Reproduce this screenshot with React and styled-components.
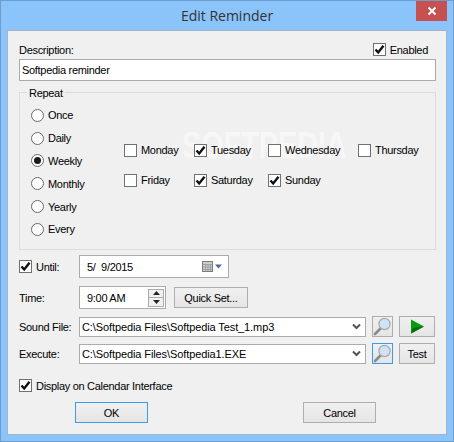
import React from "react";
import styled, { createGlobalStyle } from "styled-components";

const GlobalStyle = createGlobalStyle`
  html, body { margin: 0; padding: 0; background: #8ac4fa; }
  * { box-sizing: border-box; }
`;

const Window = styled.div`
  position: relative;
  width: 454px;
  height: 442px;
  display: flex;
  flex-direction: column;
  padding: 0 6px 6px 6px;
  background: #8ac4fa;
  border: 1px solid #6e9ccb;
  font-family: "Liberation Sans", Arial, sans-serif;
  font-size: 11px;
  letter-spacing: -0.3px;
  color: #000;
`;

const TitleBar = styled.div`
  height: 29px;
  flex: none;
  display: grid;
  grid-template-columns: 1fr auto 1fr;
`;

const Title = styled.div`
  grid-column: 2;
  font-family: "Open Sans", sans-serif;
  font-size: 14px;
  letter-spacing: 0;
  line-height: 30px;
  color: #333;
`;

const CloseButton = styled.div`
  grid-column: 3;
  justify-self: end;
  width: 31px;
  height: 20px;
  background: #c75050;
  display: flex;
  align-items: center;
  justify-content: center;
`;

const Client = styled.div`
  flex: 1;
  display: flex;
  flex-direction: column;
  padding: 0 10px 0 11px;
  background: #f0f0f0;
  border: 1px solid #a3b4c6;
`;

const TopRow = styled.div`
  height: 28px;
  display: flex;
  align-items: flex-end;
  justify-content: space-between;
  padding: 0 8px 3px 0;
`;

const Input = styled.div`
  height: 22px;
  padding-left: 2px;
  display: flex;
  align-items: center;
  background: #fff;
  border: 1px solid #ababab;
  white-space: pre;
`;

const Group = styled.fieldset`
  margin: 3px 0 0;
  padding: 0 0 0 11px;
  height: 166px;
  display: flex;
  border: 1px solid #dcdcdc;
`;

const Legend = styled.legend`
  margin-left: -4px;
  padding: 2px 2px 0;
  line-height: 14px;
`;

const RadioColumn = styled.div`
  width: 93px;
  flex: none;
  margin-top: 4px;
  display: flex;
  flex-direction: column;
`;

const Option = styled.label`
  height: ${(p) => p.$height || "auto"};
  display: flex;
  align-items: center;
  gap: 4px;
  white-space: nowrap;
`;

const RadioMark = styled.span`
  width: 13px;
  height: 13px;
  flex: none;
  display: flex;
  align-items: center;
  justify-content: center;
  background: #fff;
  border: 1px solid #6a6a6a;
  border-radius: 50%;
  &::after {
    content: "";
    display: ${(p) => (p.$on ? "block" : "none")};
    width: 7px;
    height: 7px;
    border-radius: 50%;
    background: #1a1a1a;
  }
`;

const CheckMark = styled.span`
  width: 13px;
  height: 13px;
  flex: none;
  display: flex;
  align-items: center;
  justify-content: center;
  background: #fff;
  border: 1px solid #707070;
`;

const DaysGrid = styled.div`
  position: relative;
  z-index: 1;
  margin-top: 35px;
  display: grid;
  grid-template-columns: 70px 74px 90px auto;
  grid-auto-rows: 30px;
  justify-content: start;
  align-content: start;
`;

const FieldRow = styled.div`
  display: flex;
  align-items: center;
  margin-top: ${(p) => p.$top || 0}px;
`;

const FieldLabel = styled.div`
  width: 60px;
  flex: none;
  white-space: nowrap;
`;

const DateBox = styled(Input)`
  width: 150px;
  height: 23px;
  padding-left: 7px;
  justify-content: space-between;
  padding-right: 5px;
`;

const TimeBox = styled(Input)`
  width: 87px;
  height: 23px;
  padding-left: 7px;
  justify-content: space-between;
  padding-right: 1px;
`;

const Spinner = styled.div`
  width: 16px;
  height: 18px;
  display: flex;
  flex-direction: column;
  border: 1px solid #ababab;
`;

const SpinPart = styled.div`
  flex: 1;
  display: flex;
  align-items: center;
  justify-content: center;
  background: #f0f0f0;
  & + & { border-top: 1px solid #ababab; }
`;

const Button = styled.div`
  width: ${(p) => p.$width}px;
  height: 21px;
  margin-left: ${(p) => p.$left || 0}px;
  flex: none;
  display: flex;
  align-items: center;
  justify-content: center;
  background: linear-gradient(#f0f0f0, #e5e5e5);
  border: 1px solid ${(p) => (p.$focus ? "#3c9bf0" : "#adadad")};
`;

const Combo = styled(Input)`
  width: 287px;
  height: 20px;
  padding-right: 4px;
  letter-spacing: -0.1px;
  justify-content: space-between;
`;

const Footer = styled.div`
  margin-top: 10px;
  display: flex;
  padding-left: 56px;
  gap: 155px;
`;

const Watermark = styled.div`
  position: absolute;
  left: 181px;
  top: 124px;
  font-family: "Liberation Sans", sans-serif;
  font-weight: bold;
  font-size: 36px;
  letter-spacing: 0;
  color: rgba(255, 255, 255, 0.55);
  transform: scaleX(0.8);
  transform-origin: left;
  pointer-events: none;
`;

const Check = () => (
  <svg width="11" height="11" viewBox="0 0 11 11">
    <path d="M1.5 5.5 L4.2 8.5 L9.5 1.8" fill="none" stroke="#111" strokeWidth="2.4" />
  </svg>
);

const Checkbox = ({ on, label }) => (
  <Option>
    <CheckMark>{on && <Check />}</CheckMark>
    {label}
  </Option>
);

const Radio = ({ on, label }) => (
  <Option $height="22.8px">
    <RadioMark $on={on} />
    {label}
  </Option>
);

const Chevron = () => (
  <svg width="9" height="7" viewBox="0 0 9 7">
    <path d="M1 1.5 L4.5 5 L8 1.5" fill="none" stroke="#555" strokeWidth="2" />
  </svg>
);

const Magnifier = () => (
  <svg width="19" height="19" viewBox="0 0 19 19">
    <path d="M9 10 L2 17" stroke="#8a8a8a" strokeWidth="2.6" strokeLinecap="round" />
    <circle cx="11.5" cy="7" r="5.6" fill="#cfe2f7" stroke="#a8a8a8" strokeWidth="1.2" />
  </svg>
);

const CalendarIcon = () => (
  <svg width="21" height="11" viewBox="0 0 21 11">
    <rect x="0.5" y="0.5" width="10" height="10" fill="#c9ced2" stroke="#7c7c7c" />
    <path d="M1 3.5H10M1 6H10M1 8.5H10M3.5 3V10M6 3V10M8.5 3V10" stroke="#939393" strokeWidth="0.7" />
    <path d="M13 3.5H20L16.5 7.5Z" fill="#4a6d94" />
  </svg>
);

const days = [
  { label: "Monday" },
  { label: "Tuesday", on: true },
  { label: "Wednesday" },
  { label: "Thursday" },
  { label: "Friday" },
  { label: "Saturday", on: true },
  { label: "Sunday", on: true },
];

const repeats = ["Once", "Daily", "Weekly", "Monthly", "Yearly", "Every"];

export default function App() {
  return (
    <Window>
      <GlobalStyle />
      <TitleBar>
        <Title>Edit Reminder</Title>
        <CloseButton>
          <svg width="10" height="10" viewBox="0 0 10 10">
            <path d="M1.5 1.5 L8.5 8.5 M8.5 1.5 L1.5 8.5" stroke="#fff" strokeWidth="2" />
          </svg>
        </CloseButton>
      </TitleBar>
      <Client>
        <TopRow>
          <span>Description:</span>
          <Checkbox on label="Enabled" />
        </TopRow>
        <Input>Softpedia reminder</Input>
        <Group>
          <Legend>Repeat</Legend>
          <RadioColumn>
            {repeats.map((r) => (
              <Radio key={r} label={r} on={r === "Weekly"} />
            ))}
          </RadioColumn>
          <DaysGrid>
            {days.map((d) => (
              <Checkbox key={d.label} label={d.label} on={d.on} />
            ))}
          </DaysGrid>
        </Group>
        <FieldRow $top={5}>
          <FieldLabel>
            <Checkbox on label="Until:" />
          </FieldLabel>
          <DateBox>
            5/  9/2015
            <CalendarIcon />
          </DateBox>
        </FieldRow>
        <FieldRow $top={8}>
          <FieldLabel>Time:</FieldLabel>
          <TimeBox>
            9:00 AM
            <Spinner>
              <SpinPart>
                <svg width="7" height="4" viewBox="0 0 7 4"><path d="M3.5 0L7 4H0Z" fill="#222" /></svg>
              </SpinPart>
              <SpinPart>
                <svg width="7" height="4" viewBox="0 0 7 4"><path d="M0 0H7L3.5 4Z" fill="#222" /></svg>
              </SpinPart>
            </Spinner>
          </TimeBox>
          <Button $width={74} $left={8}>Quick Set...</Button>
        </FieldRow>
        <FieldRow $top={7}>
          <FieldLabel>Sound File:</FieldLabel>
          <Combo>
            C:\Softpedia Files\Softpedia Test_1.mp3
            <Chevron />
          </Combo>
          <Button $width={21} $left={6}><Magnifier /></Button>
          <Button $width={36} $left={6}>
            <svg width="15" height="15" viewBox="0 0 15 15">
              <path d="M1 0.5 L14 7.5 L1 14.5Z" fill="#0b9a0b" />
              <path d="M14 7.5 L1 14.5 L3 9Z" fill="#0a6a10" />
            </svg>
          </Button>
        </FieldRow>
        <FieldRow $top={6}>
          <FieldLabel>Execute:</FieldLabel>
          <Combo>
            C:\Softpedia Files\Softpedia1.EXE
            <Chevron />
          </Combo>
          <Button $width={21} $left={6} $focus><Magnifier /></Button>
          <Button $width={36} $left={6}>Test</Button>
        </FieldRow>
        <FieldRow $top={15}>
          <Checkbox on label="Display on Calendar Interface" />
        </FieldRow>
        <Footer>
          <Button $width={73} $focus>OK</Button>
          <Button $width={73}>Cancel</Button>
        </Footer>
      </Client>
      <Watermark>SOFTPEDIA</Watermark>
    </Window>
  );
}
